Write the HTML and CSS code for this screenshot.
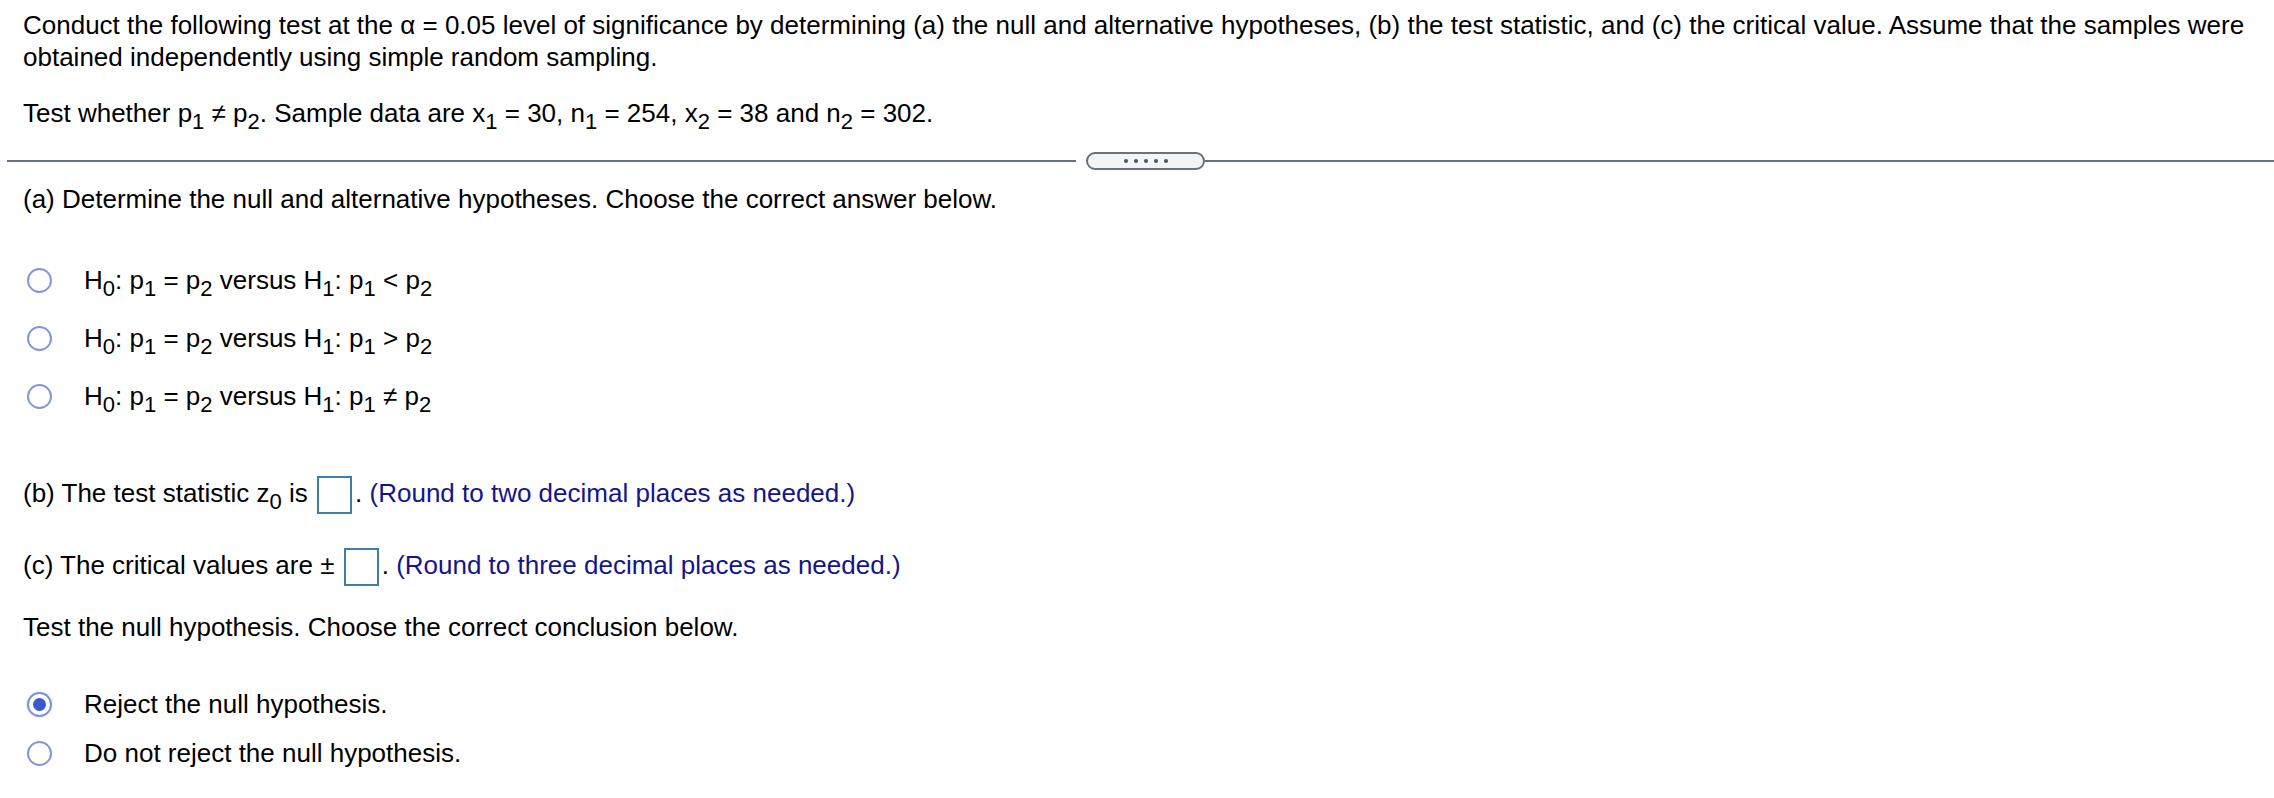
FILE: index.html
```html
<!DOCTYPE html>
<html lang="en">
<head>
<meta charset="utf-8">
<title>Two-proportion test</title>
<link rel="stylesheet" href="styles.css">
</head>
<body>
<div class="page">
  <div class="intro">
    <p class="lead">Conduct the following test at the α = 0.05 level of significance by determining (a) the null and alternative hypotheses, (b) the test statistic, and (c) the critical value. Assume that the samples were<br>obtained independently using simple random sampling.</p>
    <p class="data">Test whether p<sub>1</sub> ≠ p<sub>2</sub>. Sample data are x<sub>1</sub> = 30, n<sub>1</sub> = 254, x<sub>2</sub> = 38 and n<sub>2</sub> = 302.</p>
  </div>

  <div class="divider">
    <span class="rule"></span>
    <span class="pill"><span class="dot"></span><span class="dot"></span><span class="dot"></span><span class="dot"></span><span class="dot"></span></span>
    <span class="rule"></span>
  </div>

  <p class="question parta">(a) Determine the null and alternative hypotheses. Choose the correct answer below.</p>

  <div class="options hyp">
    <div class="option"><span class="radio"></span><span class="label">H<sub>0</sub>: p<sub>1</sub> = p<sub>2</sub> versus H<sub>1</sub>: p<sub>1</sub> &lt; p<sub>2</sub></span></div>
    <div class="option"><span class="radio"></span><span class="label">H<sub>0</sub>: p<sub>1</sub> = p<sub>2</sub> versus H<sub>1</sub>: p<sub>1</sub> &gt; p<sub>2</sub></span></div>
    <div class="option"><span class="radio"></span><span class="label">H<sub>0</sub>: p<sub>1</sub> = p<sub>2</sub> versus H<sub>1</sub>: p<sub>1</sub> ≠ p<sub>2</sub></span></div>
  </div>

  <p class="question fill first">(b) The test statistic z<sub>0</sub> is <span class="box"></span>. <span class="hint">(Round to two decimal places as needed.)</span></p>
  <p class="question fill second">(c) The critical values are ± <span class="box"></span>. <span class="hint">(Round to three decimal places as needed.)</span></p>

  <p class="question conclude">Test the null hypothesis. Choose the correct conclusion below.</p>

  <div class="options concl">
    <div class="option"><span class="radio checked"></span><span class="label">Reject the null hypothesis.</span></div>
    <div class="option"><span class="radio"></span><span class="label">Do not reject the null hypothesis.</span></div>
  </div>
</div>
</body>
</html>
```

FILE: styles.css
```css
* { box-sizing: border-box; }

body {
  margin: 0;
  background: #ffffff;
  color: #000000;
  font-family: "Liberation Sans", Arial, sans-serif;
  font-size: 26px;
}

p { margin: 0; }

.page { padding-top: 9px; }

.intro { padding-left: 23px; }

.lead { line-height: 32px; }

.data { line-height: 32px; margin-top: 24px; }

sub {
  font-size: 22px;
  line-height: 0;
  vertical-align: baseline;
  position: relative;
  top: 7px;
}

.divider {
  display: flex;
  align-items: center;
  height: 18px;
  margin: 23px 0 0 7px;
}

.rule {
  flex: 1;
  height: 2px;
  background: #68717d;
}

.pill {
  width: 119px;
  height: 18px;
  margin-left: 10px;
  border: 2px solid #68717d;
  border-radius: 9px;
  background: #f3f4f6;
  display: flex;
  justify-content: center;
  align-items: center;
  gap: 6px;
}

.dot {
  width: 4px;
  height: 4px;
  border-radius: 50%;
  background: #4a5260;
}

.question {
  padding-left: 23px;
  line-height: 32px;
}

.parta { margin-top: 13px; }

.options {
  display: flex;
  flex-direction: column;
  padding-left: 27px;
}

.hyp { margin-top: 49px; gap: 26px; }

.concl { margin-top: 45px; gap: 17px; }

.option {
  display: flex;
  align-items: center;
  height: 32px;
  line-height: 32px;
}

.radio {
  width: 25px;
  height: 25px;
  border: 2px solid #8396dc;
  border-radius: 50%;
  flex: none;
  margin-right: 32px;
  display: flex;
  align-items: center;
  justify-content: center;
}

.radio.checked {
  border-color: #7b8fdc;
  box-shadow: 0 0 2px rgba(120, 140, 220, 0.5);
}

.radio.checked::after {
  content: "";
  width: 13px;
  height: 13px;
  border-radius: 50%;
  background: #3b57cc;
}

.fill { line-height: 40px; }

.fill.first { margin-top: 61px; }

.fill.second { margin-top: 31px; }

.box {
  display: inline-block;
  width: 35px;
  height: 38px;
  margin: 0 3px 0 2px;
  border: 2px solid #3f7fa6;
  background: #ffffff;
  vertical-align: middle;
}

.hint { color: #14148c; }

.conclude { margin-top: 25px; }
```
